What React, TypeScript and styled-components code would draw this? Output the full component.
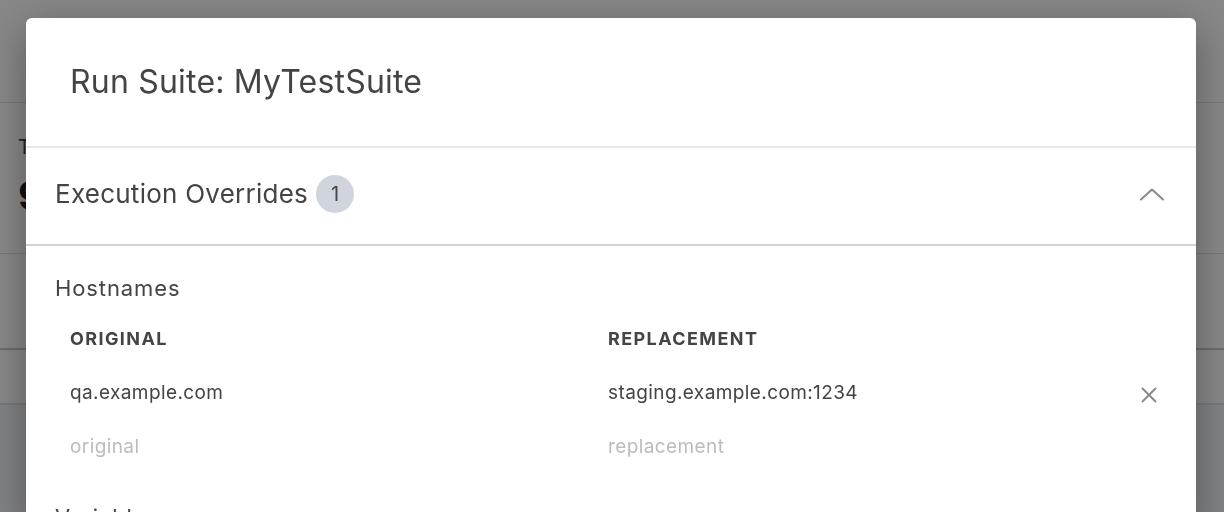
import styled, { createGlobalStyle } from "styled-components";

const GlobalStyle = createGlobalStyle`
  html, body {
    margin: 0;
    padding: 0;
    background: #f3f5f8;
    font-family: Inter, "Noto Sans", sans-serif;
    -webkit-font-smoothing: antialiased;
  }
  * {
    box-sizing: border-box;
  }
`;

/* page behind the dialog */

const Page = styled.div`
  width: 1224px;
  height: 512px;
  overflow: hidden;
  background: #f3f5f8;
  display: flex;
  flex-direction: column;
`;

const TopBar = styled.header`
  height: 103px;
  flex-shrink: 0;
  background: #fff;
  border-bottom: 1px solid #e2e2e2;
`;

const Stats = styled.section`
  height: 151px;
  flex-shrink: 0;
  background: #fff;
  padding: 32px 18px 0;
  border-bottom: 1px solid #e2e2e2;
`;

const StatLabel = styled.div`
  font-size: 20px;
  color: #444;
`;

const StatValue = styled.div`
  margin-top: 12px;
  font-size: 40px;
  font-weight: 700;
  color: #1b1f2c;
`;

const Band = styled.div<{ $height: number; $line: string }>`
  height: ${(p) => p.$height}px;
  flex-shrink: 0;
  background: #fff;
  border-bottom: 2px solid ${(p) => p.$line};
`;

/* dialog */

const Overlay = styled.div`
  position: fixed;
  inset: 0;
  background: rgba(0, 0, 0, 0.47);
  display: flex;
  justify-content: flex-start;
  align-items: flex-start;
  padding: 18px 0 0 26px;
`;

const Dialog = styled.div`
  width: 1170px;
  background: #fff;
  border-radius: 6px;
  box-shadow: 0 10px 40px rgba(0, 0, 0, 0.35);
  color: #444;
  overflow: hidden;
`;

const DialogHeader = styled.div`
  height: 130px;
  display: flex;
  align-items: center;
  padding: 0 44px 2px;
  border-bottom: 2px solid #e7e7ec;
`;

const Title = styled.h2`
  margin: 0;
  font-size: 32px;
  font-weight: 400;
  letter-spacing: 0.2px;
  color: #444;
`;

const SectionHeader = styled.button`
  width: 100%;
  height: 98px;
  display: flex;
  align-items: center;
  gap: 8px;
  padding: 0 32px 5px 29px;
  border: 0;
  border-bottom: 2px solid #cfd3db;
  background: #fff;
  font-family: inherit;
  cursor: pointer;
  text-align: left;
`;

const SectionTitle = styled.span`
  font-size: 26px;
  letter-spacing: 0.25px;
  color: #444;
`;

const Badge = styled.span`
  width: 38px;
  height: 38px;
  border-radius: 50%;
  background: #d0d5dd;
  color: #444;
  font-size: 20px;
  display: grid;
  place-items: center;
`;

const Chevron = styled.svg`
  margin-left: auto;
  margin-top: 2px;
  width: 24px;
  height: 13px;
`;

const SectionBody = styled.div`
  padding: 29px 30px 0 29px;
`;

const GroupLabel = styled.div`
  font-size: 22px;
  letter-spacing: 0.9px;
  color: #444;
`;

const Table = styled.div`
  margin-top: 10px;
  display: grid;
  grid-template-columns: 538px 538px 1fr;
  grid-auto-rows: 54px;
  align-items: center;
`;

const HeadCell = styled.div`
  padding: 0 15px;
  font-size: 18px;
  font-weight: 700;
  letter-spacing: 1.4px;
  text-transform: uppercase;
  color: #444;
`;

const Cell = styled.div`
  padding: 0 15px;
  font-size: 19px;
  letter-spacing: 0.4px;
  color: #444;
`;

const Field = styled.input`
  width: 100%;
  padding: 0 15px;
  border: 0;
  outline: none;
  background: transparent;
  font-family: inherit;
  font-size: 19px;
  letter-spacing: 0.4px;
  color: #444;

  &::placeholder {
    color: #bcbcbc;
  }
`;

const RemoveButton = styled.button`
  justify-self: center;
  margin-top: 6px;
  padding: 0;
  border: 0;
  background: none;
  display: grid;
  place-items: center;
  cursor: pointer;
`;

const NextLabel = styled(GroupLabel)`
  margin-top: 31px;
`;

const hostnames = [{ original: "qa.example.com", replacement: "staging.example.com:1234" }];

export default function App() {
  return (
    <>
      <GlobalStyle />
      <Page>
        <TopBar />
        <Stats>
          <StatLabel>Total runs</StatLabel>
          <StatValue>9</StatValue>
        </Stats>
        <Band $height={96} $line="#c9c9cc" />
        <Band $height={55} $line="#e2e2e2" />
      </Page>
      <Overlay>
        <Dialog>
          <DialogHeader>
            <Title>Run Suite: MyTestSuite</Title>
          </DialogHeader>
          <SectionHeader>
            <SectionTitle>Execution Overrides</SectionTitle>
            <Badge>1</Badge>
            <Chevron viewBox="0 0 24 13" fill="none">
              <polyline
                points="1,11.5 12,1.5 23,11.5"
                stroke="#8a8a8a"
                strokeWidth="2"
                strokeLinecap="round"
                strokeLinejoin="round"
              />
            </Chevron>
          </SectionHeader>
          <SectionBody>
            <GroupLabel>Hostnames</GroupLabel>
            <Table>
              <HeadCell>Original</HeadCell>
              <HeadCell>Replacement</HeadCell>
              <div />
              {hostnames.map((h) => (
                <>
                  <Cell>{h.original}</Cell>
                  <Cell>{h.replacement}</Cell>
                  <RemoveButton aria-label="Remove">
                    <svg width="16" height="16" viewBox="0 0 16 16" fill="none">
                      <path
                        d="M1.5 1.5 L14.5 14.5 M14.5 1.5 L1.5 14.5"
                        stroke="#8a8a8a"
                        strokeWidth="2"
                        strokeLinecap="round"
                      />
                    </svg>
                  </RemoveButton>
                </>
              ))}
              <Field placeholder="original" />
              <Field placeholder="replacement" />
              <div />
            </Table>
            <NextLabel>Variables</NextLabel>
          </SectionBody>
        </Dialog>
      </Overlay>
    </>
  );
}
